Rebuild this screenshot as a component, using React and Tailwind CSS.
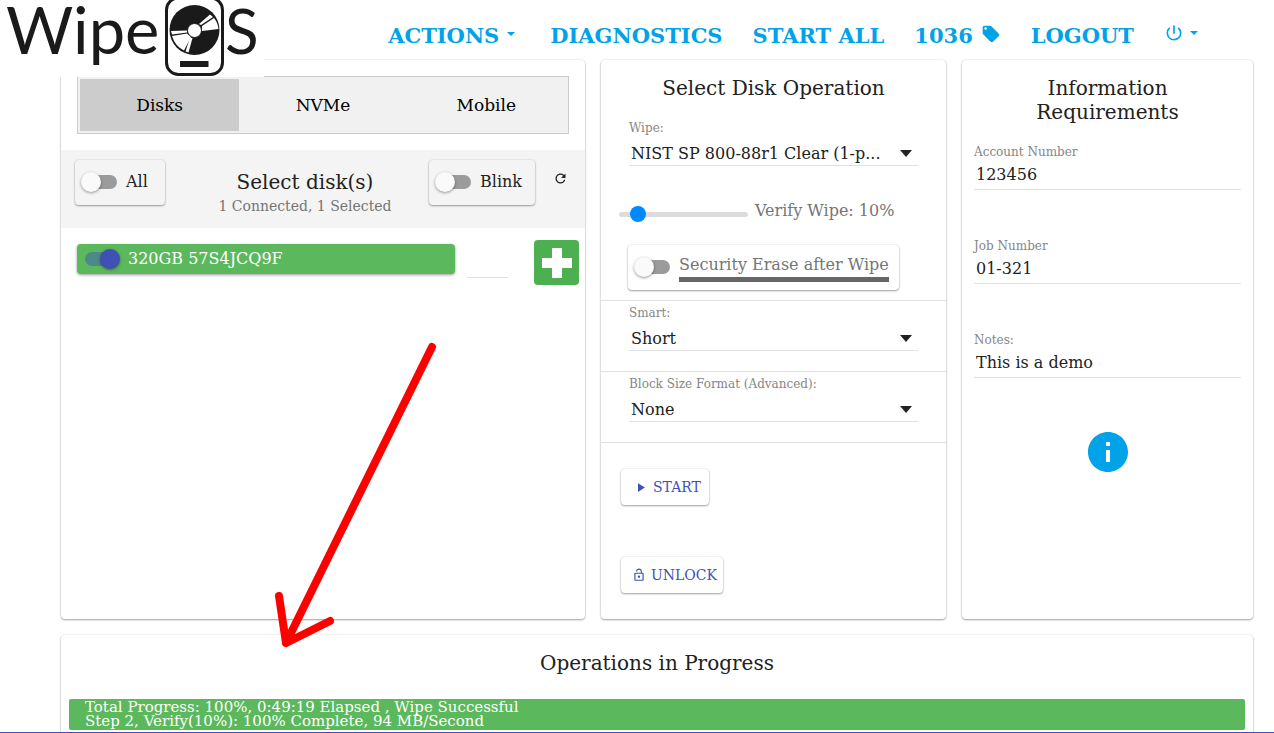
import React, { useState } from 'react';
import clsx from 'clsx';
import { MdRefresh, MdPlayArrow, MdLockOpen, MdInfo, MdPowerSettingsNew, MdLocalOffer } from 'react-icons/md';

const CARD = 'rounded-[4px] bg-white shadow-[0_1px_2px_rgba(0,0,0,0.35),0_0_2px_rgba(0,0,0,0.15)]';
const TABS = ['Disks', 'NVMe', 'Mobile'];

const Logo = () => (
  <svg className="block h-[77px] w-[264px]" viewBox="0 0 264 77" fill="#1a1a1a" role="img" aria-label="WipeOS">
    <text x="6" y="54" fontFamily="Lato" fontSize="65">Wipe</text>
    <text x="225" y="54" fontFamily="Lato" fontSize="62">S</text>
    <rect x="166.5" y="-2" width="56" height="76.5" rx="12" fill="#fff" stroke="#1a1a1a" strokeWidth="3" />
    <circle cx="194.5" cy="30" r="25" />
    <g fill="#fff">
      <path d="M199 24 L210 14.5 L213 17 L201 25 Z" />
      <path d="M202 26 L214 18 Q218 23 218.5 29 L202 31 Z" />
      <path d="M171 31 L187 30.5 L187 32.5 L172 34.5 Z" />
      <path d="M172 36 L187 33.5 L191 37 L184 50.5 Q175 46 172 36 Z" />
      <path d="M190 37.5 L192.5 38 L188.5 52.5 L185.5 51.5 Z" />
      <circle cx="194.5" cy="30.5" r="7" stroke="#1a1a1a" strokeWidth="1" />
    </g>
    <rect x="180" y="61" width="28.5" height="6" />
  </svg>
);

const Caret = ({ className }) => (
  <svg className={clsx('h-1 w-2', className)} viewBox="0 0 8 4" fill="currentColor">
    <path d="M0 0h8L4 4z" />
  </svg>
);

const Switch = ({ id, checked, onChange }) => (
  <input
    id={id}
    type="checkbox"
    checked={checked}
    onChange={e => onChange(e.target.checked)}
    className="mx-px flex h-[14px] w-[34px] shrink-0 appearance-none items-center rounded-full bg-[#9b9b9b] before:-ml-[2px] before:size-5 before:shrink-0 before:rounded-full before:bg-[#fafafa] before:shadow-[0_1px_3px_rgba(0,0,0,0.4)] checked:bg-[#4e8989] checked:before:ml-[15px] checked:before:bg-[#3f51b5]"
  />
);

const SwitchBox = ({ id, label, className }) => {
  const [on, setOn] = useState(false);
  return (
    <div className={clsx('flex h-[45px] items-center gap-2 rounded-[4px] px-[7px] pb-px shadow-[0_1px_2px_rgba(0,0,0,0.35),0_0_2px_rgba(0,0,0,0.15)]', className)}>
      <Switch id={id} checked={on} onChange={setOn} />
      <label htmlFor={id}>{label}</label>
    </div>
  );
};

const SelectField = ({ id, label, options }) => (
  <div className="px-7">
    <label htmlFor={id} className="block text-xs leading-4 text-[#858585]">{label}</label>
    <div className="relative border-b border-[#e0e0e0]">
      <select id={id} className="block h-[29px] w-full appearance-none bg-transparent pt-[6px] pr-8 pl-[2px] text-base text-[#212121]">
        {options.map(option => (
          <option key={option}>{option}</option>
        ))}
      </select>
      <svg className="pointer-events-none absolute top-[14px] right-[6px] h-[7px] w-3" viewBox="0 0 12 7" fill="#212121">
        <path d="M0 0h12L6 7z" />
      </svg>
    </div>
  </div>
);

const TextField = ({ id, label, value }) => (
  <div>
    <label htmlFor={id} className="block text-xs leading-4 text-[#858585]">{label}</label>
    <input id={id} defaultValue={value} className="block h-[30px] w-full border-b border-[#e0e0e0] pl-[2px] text-base text-[#212121]" />
  </div>
);

const NavBar = () => (
  <header className="flex h-[60px] items-center justify-end pt-3 pr-[76px]">
    <nav className="flex items-center gap-[30px] text-[21px] font-bold text-[#00a2e8]">
      <button className="mr-[5px] flex items-center gap-2 font-bold">ACTIONS <Caret className="mb-1" /></button>
      <a href="#diagnostics">DIAGNOSTICS</a>
      <a href="#start-all">START ALL</a>
      <a href="#tags" className="flex items-center gap-2">1036 <MdLocalOffer className="mb-1 size-5" /></a>
      <a href="#logout">LOGOUT</a>
      <button aria-label="Power" className="mb-[6px] flex items-center gap-[6px]"><MdPowerSettingsNew className="size-5" /> <Caret /></button>
    </nav>
  </header>
);

const DiskPanel = () => {
  const [tab, setTab] = useState('Disks');
  const [selected, setSelected] = useState(true);

  return (
    <section className={CARD}>
      <div className="mx-4 mt-4 grid h-[58px] grid-cols-3 border border-[#ccc] bg-[#f1f1f1]">
        {TABS.map(name => (
          <button
            key={name}
            onClick={() => setTab(name)}
            className={clsx('m-[2px] pt-[2px] text-[17px] text-black', tab === name && 'bg-[#ccc]')}
          >
            {name}
          </button>
        ))}
      </div>

      <div className="mt-4 flex h-[78px] items-start bg-[#f4f4f4] pt-[10px] pr-[17px] pl-[14px]">
        <SwitchBox id="all" label="All" className="w-[90px]" />
        <div className="flex-1 pt-[10px] pl-4 text-center">
          <h2 className="text-xl leading-6">Select disk(s)</h2>
          <p className="text-sm leading-6 text-[#757575]">1 Connected, 1 Selected</p>
        </div>
        <SwitchBox id="blink" label="Blink" className="w-[106px]" />
        <button aria-label="Refresh" className="mt-[11px] ml-[18px]"><MdRefresh className="size-[15px]" /></button>
      </div>

      <div className="mt-3 flex items-start gap-3 pr-[6px] pl-4">
        <div className="mt-1 flex h-[30px] flex-1 items-center gap-2 rounded-[4px] bg-[#5cb85c] px-[7px] text-white shadow-[0_1px_3px_rgba(0,0,0,0.4)]">
          <Switch id="disk" checked={selected} onChange={setSelected} />
          <label htmlFor="disk">320GB 57S4JCQ9F</label>
        </div>
        <input aria-label="Slot" className="mt-2 mr-[14px] h-[30px] w-[41px] border-b border-[#e0e0e0]" />
        <button aria-label="Add" className="flex size-[45px] items-center justify-center rounded-[4px] bg-[#4caf50] text-white">
          <svg className="size-[30px]" viewBox="0 0 30 30" fill="currentColor">
            <path d="M10 0h10v10h10v10H20v10H10V20H0V10h10z" />
          </svg>
        </button>
      </div>
    </section>
  );
};

const OperationPanel = () => {
  const [verify, setVerify] = useState(10);

  return (
    <section className={CARD}>
      <div className="border-b border-[#e0e0e0] pt-4 pb-[10px]">
        <h2 className="mb-5 text-center text-xl leading-6">Select Disk Operation</h2>
        <SelectField id="wipe" label="Wipe:" options={['NIST SP 800-88r1 Clear (1-p...']} />
        <div className="mt-[33px] flex items-center gap-[7px] pl-[18px]">
          <input
            id="verify"
            type="range"
            min="0"
            max="100"
            value={verify}
            onChange={e => setVerify(e.target.value)}
            className="mt-[6px] h-[5px] w-[129px] appearance-none rounded-full bg-[#dcdcdc] [&::-webkit-slider-thumb]:size-4 [&::-webkit-slider-thumb]:appearance-none [&::-webkit-slider-thumb]:rounded-full [&::-webkit-slider-thumb]:bg-[#0088ff]"
          />
          <label htmlFor="verify" className="text-[#757575]">Verify Wipe: {verify}%</label>
        </div>
        <SwitchBox
          id="erase"
          className="mt-[22px] ml-[27px] w-[271px]"
          label={
            <span className="block border-b-5 border-[#666] leading-6 whitespace-nowrap text-[#757575]">
              Security Erase after Wipe
            </span>
          }
        />
      </div>
      <div className="border-b border-[#e0e0e0] pt-1 pb-5">
        <SelectField id="smart" label="Smart:" options={['Short']} />
      </div>
      <div className="border-b border-[#e0e0e0] pt-1 pb-5">
        <SelectField id="block-size" label="Block Size Format (Advanced):" options={['None']} />
      </div>
      <div className="flex flex-col items-start gap-[52px] py-[26px] pl-5 text-sm text-[#3f51b5]">
        <button className={clsx(CARD, 'flex h-9 items-center gap-[5px] pr-2 pl-3')}>
          <MdPlayArrow className="size-[15px]" />
          START
        </button>
        <button className={clsx(CARD, 'flex h-9 items-center gap-[5px] pr-[6px] pl-[11px]')}>
          <MdLockOpen className="size-[14px]" />
          UNLOCK
        </button>
      </div>
    </section>
  );
};

const InfoPanel = () => (
  <section className={clsx(CARD, 'px-3 pt-4')}>
    <h2 className="mx-auto w-44 text-center text-xl leading-6">Information Requirements</h2>
    <div className="mt-5 flex flex-col gap-12">
      <TextField id="account" label="Account Number" value="123456" />
      <TextField id="job" label="Job Number" value="01-321" />
      <TextField id="notes" label="Notes:" value="This is a demo" />
    </div>
    <button aria-label="Information" className="mx-auto mt-[50px] block text-[#00a2e8]">
      <MdInfo className="size-12" />
    </button>
  </section>
);

const App = () => (
  <div className="relative flex min-h-screen flex-col bg-white font-['DejaVu_Serif',serif] text-base text-[#212121]">
    <NavBar />
    <div className="absolute top-0 left-0 bg-white">
      <Logo />
    </div>

    <main className="flex flex-1 flex-col gap-4 pr-[21px] pl-[61px]">
      <div className="grid grid-cols-[524fr_345fr_291fr] gap-4">
        <DiskPanel />
        <OperationPanel />
        <InfoPanel />
      </div>
      <section className={clsx(CARD, 'flex-1 rounded-b-none px-2 pt-4')}>
        <h2 className="text-center text-xl leading-6">Operations in Progress</h2>
        <div className="mt-6 h-[31px] rounded-[2px] bg-[#5cb85c] px-4 pt-px text-[15px] leading-[14px] text-white">
          <p>Total Progress: 100%, 0:49:19 Elapsed , Wipe Successful</p>
          <p>Step 2, Verify(10%): 100% Complete, 94 MB/Second</p>
        </div>
      </section>
    </main>
    <footer className="border-t border-[#3f51b5]" />

    <svg
      className="pointer-events-none absolute top-[340px] left-[270px] h-[310px] w-[170px]"
      viewBox="0 0 170 310"
      fill="none"
      stroke="#f00"
      strokeWidth="8"
      strokeLinecap="round"
      strokeLinejoin="round"
    >
      <path d="M162 7 L16 303 M9 256 L16 303 L60 281" />
    </svg>
  </div>
);

export default App;
